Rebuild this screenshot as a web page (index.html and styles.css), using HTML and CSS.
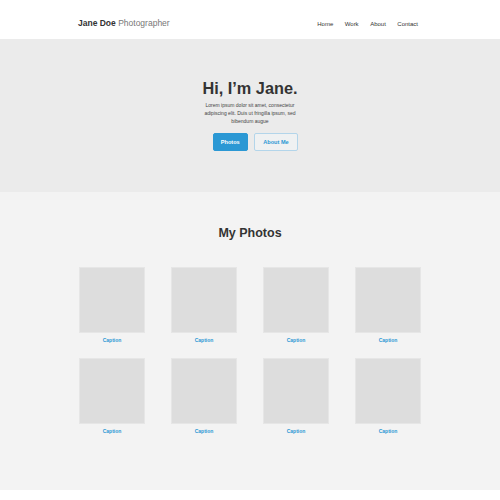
FILE: index.html
```html
<!DOCTYPE html>
<html lang="en">
<head>
<meta charset="utf-8">
<title>Jane Doe Photographer</title>
<link rel="stylesheet" href="styles.css">
</head>
<body>
<header class="site-header">
  <div class="container header-inner">
    <div class="logo"><strong>Jane Doe</strong> Photographer</div>
    <nav class="nav">
      <a href="#">Home</a>
      <a href="#">Work</a>
      <a href="#">About</a>
      <a href="#">Contact</a>
    </nav>
  </div>
</header>
<section class="hero">
  <h1 class="hero-title">Hi, I’m Jane.</h1>
  <p class="hero-text">Lorem ipsum dolor sit amet, consectetur adipiscing elit. Duis ut fringilla ipsum, sed bibendum augue</p>
  <div class="hero-buttons">
    <a class="btn btn-primary" href="#">Photos</a>
    <a class="btn btn-secondary" href="#">About Me</a>
  </div>
</section>
<section class="photos">
  <h2 class="photos-title">My Photos</h2>
  <div class="grid">
    <figure class="photo"><div class="thumb"></div><figcaption>Caption</figcaption></figure>
    <figure class="photo"><div class="thumb"></div><figcaption>Caption</figcaption></figure>
    <figure class="photo"><div class="thumb"></div><figcaption>Caption</figcaption></figure>
    <figure class="photo"><div class="thumb"></div><figcaption>Caption</figcaption></figure>
    <figure class="photo"><div class="thumb"></div><figcaption>Caption</figcaption></figure>
    <figure class="photo"><div class="thumb"></div><figcaption>Caption</figcaption></figure>
    <figure class="photo"><div class="thumb"></div><figcaption>Caption</figcaption></figure>
    <figure class="photo"><div class="thumb"></div><figcaption>Caption</figcaption></figure>
  </div>
</section>
<footer class="footer"></footer>
</body>
</html>
```
FILE: styles.css
```css
* { box-sizing: border-box; }
html, body { margin: 0; padding: 0; }
body {
  font-family: "Liberation Sans", Arial, Helvetica, sans-serif;
  color: #333;
  background: #fff;
}
a { text-decoration: none; }

.container {
  width: 342px;
  margin: 0 auto;
}

.site-header {
  height: 39px;
  padding-top: 18px;
  background: #fff;
}
.header-inner {
  display: flex;
  justify-content: space-between;
  align-items: baseline;
}
.logo {
  font-size: 8.5px;
  line-height: 10px;
  color: #777;
  margin-left: -1px;
}
.logo strong { color: #333; }
.nav {
  display: flex;
  gap: 11.5px;
  padding-right: 3px;
}
.nav a {
  font-size: 6px;
  line-height: 10px;
  color: #333;
}

.hero {
  background: #ebebeb;
  padding: 41px 0;
  text-align: center;
}
.hero-title {
  margin: 0;
  font-size: 16.3px;
  line-height: 16px;
  font-weight: bold;
  color: #333;
}
.hero-text {
  width: 100px;
  margin: 5px auto 0;
  font-size: 5px;
  line-height: 8px;
  color: #444;
}
.hero-buttons {
  display: flex;
  justify-content: center;
  gap: 6px;
  margin-top: 8px;
  padding-left: 11px;
}
.btn {
  display: flex;
  align-items: center;
  justify-content: center;
  height: 18px;
  border-radius: 2px;
  font-size: 5.6px;
  font-weight: bold;
  border: 1px solid transparent;
}
.btn-primary {
  width: 35px;
  background: #2b98d4;
  border-color: #2b98d4;
  color: #fff;
}
.btn-secondary {
  width: 44.5px;
  background: #eff1f2;
  border-color: #b3d5ea;
  color: #2b98d4;
}

.photos {
  background: #f3f3f3;
  padding: 34px 0 56px;
}
.photos-title {
  margin: 0 0 27px;
  text-align: center;
  font-size: 12.5px;
  line-height: 14px;
  font-weight: bold;
  color: #333;
}
.grid {
  width: 342px;
  margin: 0 auto;
  display: grid;
  grid-template-columns: repeat(4, 66px);
  column-gap: 26px;
  row-gap: 15px;
}
.photo { margin: 0; }
.thumb {
  width: 66px;
  height: 66px;
  background: #dddddd;
  border: 1px solid #e6e6e6;
}
.photo figcaption {
  margin-top: 4px;
  text-align: center;
  font-size: 5px;
  line-height: 6px;
  font-weight: bold;
  color: #2b98d4;
}

.footer {
  height: 40px;
  background: #fff;
}
```
